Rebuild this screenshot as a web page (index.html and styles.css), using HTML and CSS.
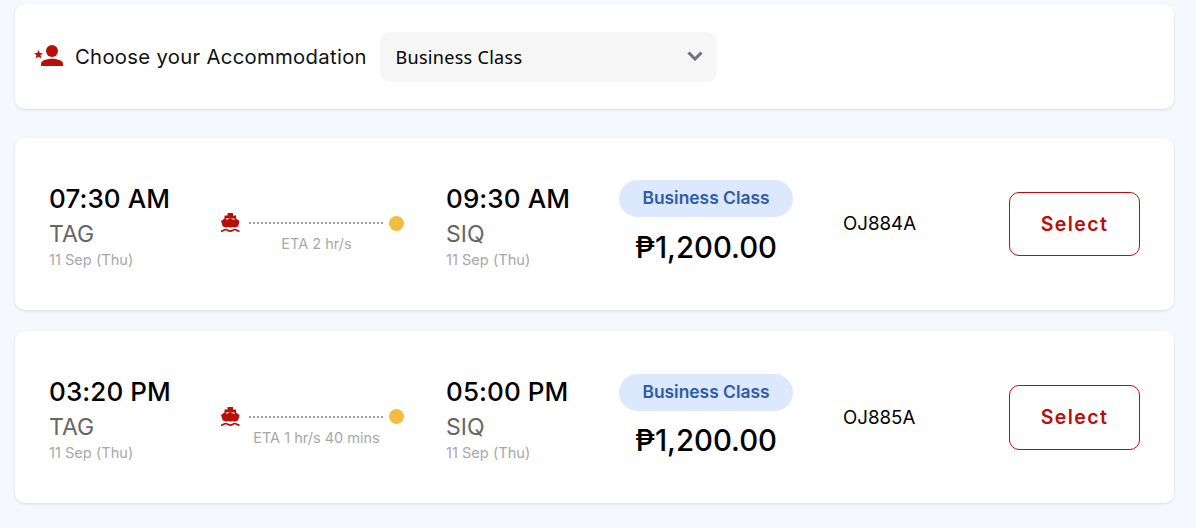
FILE: index.html
```html
<!DOCTYPE html>
<html lang="en">
<head>
    <meta charset="UTF-8">
    <meta name="viewport" content="width=device-width, initial-scale=1.0">
    <title>Choose your Accommodation</title>
    <link rel="stylesheet" href="styles.css">
</head>
<body>
    <div class="container">
        <div class="card accommodation">
            <svg class="person-icon" width="32" height="22" viewBox="0 0 32 22">
                <path fill="#b80f0a" d="M5.500 5l1.300 3 3.200.2-2.500 2 .9 3.200-2.900-1.700-2.900 1.700.9-3.200-2.500-2 3.200-.2z"/>
                <circle fill="#b80f0a" cx="19" cy="6" r="6"/>
                <path fill="#b80f0a" d="M8 21v-2.500c0-3.200 6.500-4.800 11-4.800s11 1.600 11 4.800V21z"/>
            </svg>
            <span class="accommodation-label">Choose your Accommodation</span>
            <div class="select-box">
                <span>Business Class</span>
                <svg width="16" height="10" viewBox="0 0 16 10">
                    <path fill="none" stroke="#6b7280" stroke-width="3" d="M1.500 1.500L8 8l6.500-6.500"/>
                </svg>
            </div>
        </div>

        <div class="card trip">
            <div class="stop depart">
                <div class="time">07:30 AM</div>
                <div class="port">TAG</div>
                <div class="date">11 Sep (Thu)</div>
            </div>
            <div class="route">
                <div class="route-line">
                    <svg class="boat" width="22" height="20" viewBox="0 0 22 20">
                        <path fill="#b80f0a" d="M7.500 0h5.500v2.500h3v3l3.500 2.500-1.300 5.500c-1.300.1-2.500.7-3.400 1.300-1.200-1-3.300-1-4.300 0-1.200-1-3.100-1-4.300 0-.9-.6-2.100-1.200-3.400-1.300L1 8l3.500-2.500v-3h3z"/>
                        <path fill="#fff" d="M6 5.500h8.500v1.400L10.300 5.500 6 6.900z"/>
                        <path fill="none" stroke="#b80f0a" stroke-width="1.700" d="M1 18.200c2.500 0 3-1.700 4.600-1.700s2.500 1.700 4.700 1.700 2.900-1.700 4.600-1.700 2.100 1.700 4.600 1.700"/>
                    </svg>
                    <span class="dots"></span>
                    <span class="dest-dot"></span>
                </div>
                <div class="eta">ETA 2 hr/s</div>
            </div>
            <div class="stop arrive">
                <div class="time">09:30 AM</div>
                <div class="port">SIQ</div>
                <div class="date">11 Sep (Thu)</div>
            </div>
            <div class="price-box">
                <div class="pill">Business Class</div>
                <div class="price">₱1,200.00</div>
            </div>
            <div class="code">OJ884A</div>
            <button class="select-btn">Select</button>
        </div>

        <div class="card trip">
            <div class="stop depart">
                <div class="time">03:20 PM</div>
                <div class="port">TAG</div>
                <div class="date">11 Sep (Thu)</div>
            </div>
            <div class="route">
                <div class="route-line">
                    <svg class="boat" width="22" height="20" viewBox="0 0 22 20">
                        <path fill="#b80f0a" d="M7.500 0h5.500v2.500h3v3l3.500 2.500-1.300 5.500c-1.300.1-2.500.7-3.400 1.300-1.200-1-3.300-1-4.300 0-1.200-1-3.100-1-4.300 0-.9-.6-2.100-1.200-3.400-1.300L1 8l3.500-2.500v-3h3z"/>
                        <path fill="#fff" d="M6 5.500h8.500v1.400L10.300 5.500 6 6.900z"/>
                        <path fill="none" stroke="#b80f0a" stroke-width="1.700" d="M1 18.200c2.500 0 3-1.700 4.600-1.700s2.500 1.700 4.700 1.700 2.900-1.700 4.600-1.700 2.100 1.700 4.600 1.700"/>
                    </svg>
                    <span class="dots"></span>
                    <span class="dest-dot"></span>
                </div>
                <div class="eta">ETA 1 hr/s 40 mins</div>
            </div>
            <div class="stop arrive">
                <div class="time">05:00 PM</div>
                <div class="port">SIQ</div>
                <div class="date">11 Sep (Thu)</div>
            </div>
            <div class="price-box">
                <div class="pill">Business Class</div>
                <div class="price">₱1,200.00</div>
            </div>
            <div class="code">OJ885A</div>
            <button class="select-btn">Select</button>
        </div>
    </div>
</body>
</html>
```

FILE: styles.css
```css
/* General Styles */
body {
    font-family: 'Inter', 'Noto Sans', sans-serif;
    margin: 0;
    padding: 0;
    background: #f5f9ff;
    color: #000;
    overflow: hidden;
}

.container {
    padding: 4px 22px 0 15px;
}

.card {
    background: #fff;
    border-radius: 10px;
    box-shadow: 0 1px 3px rgba(0, 0, 0, 0.12);
}

/* Accommodation bar */
.accommodation {
    display: flex;
    align-items: center;
    height: 105px;
    padding-left: 18px;
    margin-bottom: 28.900px;
}

.person-icon {
    margin-right: 10px;
    margin-top: -1px;
}

.accommodation-label {
    font-size: 20.300px;
    letter-spacing: 0.3px;
    width: 305px;
    color: #111;
}

.select-box {
    width: 337px;
    height: 50px;
    box-sizing: border-box;
    padding: 0 14px 0 15.500px;
    display: flex;
    align-items: center;
    justify-content: space-between;
    background: #f6f6f6;
    border-radius: 10px;
    font-family: 'Noto Sans', sans-serif;
    font-size: 18px;
    letter-spacing: 0.3px;
}

.select-box svg {
    margin-top: -1px;
}

/* Trip cards */
.trip {
    display: flex;
    align-items: center;
    height: 172px;
    padding-left: 34px;
    margin-bottom: 21.500px;
}

.stop {
    margin-top: 3.400px;
}

.stop .time {
    font-size: 26px;
    font-weight: 500;
    line-height: 34px;
    letter-spacing: 0.1px;
}

.stop .port {
    font-size: 23px;
    color: #666;
    line-height: 28px;
    margin-top: 4px;
}

.stop .date {
    font-size: 14.600px;
    color: #a8a8a8;
    line-height: 20px;
    margin-top: 2px;
}

.depart {
    width: 171px;
}

.arrive {
    width: 173px;
}

.route {
    width: 184px;
    margin-right: 42px;
    margin-top: 18px;
}

.route-line {
    display: flex;
    align-items: center;
}

.boat {
    margin-right: 7px;
}

.dots {
    flex: 1;
    height: 2px;
    background: repeating-linear-gradient(90deg, #a0a0a0 0 2px, transparent 2px 4px);
}

.dest-dot {
    width: 15px;
    height: 15px;
    border-radius: 50%;
    background: #f2bd3f;
    margin-left: 6px;
}

.eta {
    font-size: 14.500px;
    color: #a8a8a8;
    text-align: center;
    margin-top: 2px;
    padding-left: 9px;
}

.price-box {
    width: 174px;
    text-align: center;
}

.pill {
    height: 37px;
    line-height: 36px;
    border-radius: 19px;
    background: #dbe8fd;
    color: #2f5ca6;
    font-size: 17.400px;
    font-weight: 600;
}

.price {
    font-size: 29.300px;
    font-weight: 500;
    line-height: 40px;
    margin-top: 10.500px;
}

.code {
    margin-left: 50px;
    width: 166px;
    font-size: 18.700px;
}

.select-btn {
    width: 131px;
    height: 64.500px;
    background: #fff;
    border: 1px solid #b80f0a;
    border-radius: 10px;
    color: #b80f0a;
    font-family: inherit;
    font-size: 19.500px;
    font-weight: 600;
    letter-spacing: 1.400px;
    cursor: pointer;
}
```
